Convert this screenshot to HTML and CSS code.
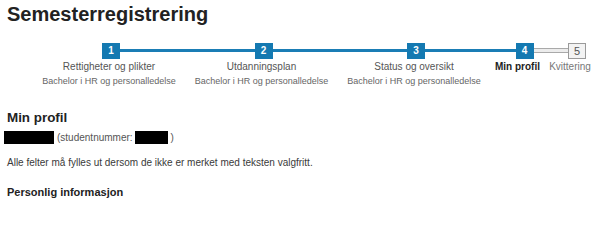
FILE: index.html
```html
<!DOCTYPE html>
<html lang="no">
<head>
<meta charset="utf-8">
<title>Semesterregistrering</title>
<link rel="stylesheet" href="styles.css">
</head>
<body>
<h1 class="title">Semesterregistrering</h1>
<ol class="steps">
  <li class="step step-done step-w1">
    <div class="track"><span class="box">1</span></div>
    <div class="label">Rettigheter og plikter</div>
    <div class="sub">Bachelor i HR og personalledelse</div>
  </li>
  <li class="step step-done step-w2">
    <div class="track"><span class="box">2</span></div>
    <div class="label">Utdanningsplan</div>
    <div class="sub">Bachelor i HR og personalledelse</div>
  </li>
  <li class="step step-done step-w3">
    <div class="track"><span class="box">3</span></div>
    <div class="label">Status og oversikt</div>
    <div class="sub">Bachelor i HR og personalledelse</div>
  </li>
  <li class="step step-current step-w4">
    <div class="track track-shift"><span class="box">4</span></div>
    <div class="label label-current">Min profil</div>
  </li>
  <li class="step step-todo step-w5">
    <div class="track track-shift"><span class="box box-todo">5</span></div>
    <div class="label label-todo">Kvittering</div>
  </li>
</ol>
<h2 class="subtitle">Min profil</h2>
<p class="ident"><span class="redact redact-name"></span> (studentnummer: <span class="redact redact-num"></span>)</p>
<p class="info">Alle felter må fylles ut dersom de ikke er merket med teksten valgfritt.</p>
<h3 class="section">Personlig informasjon</h3>
</body>
</html>
```
FILE: styles.css
```css
html, body {
  margin: 0;
  padding: 0;
  background: #ffffff;
}
body {
  padding: 0 7px;
  font-family: "Liberation Sans", Arial, sans-serif;
  color: #333333;
}
.title {
  margin: 2px 0 0;
  font-size: 20px;
  line-height: 24px;
  font-weight: bold;
  color: #222222;
}
.steps {
  list-style: none;
  margin: 17px 0 0 26px;
  padding: 0;
  display: flex;
}
.step {
  position: relative;
  text-align: center;
  flex: none;
}
.step-w1 { width: 152px; }
.step-w2 { width: 153px; }
.step-w3 { width: 152px; }
.step-w4 { width: 55px; }
.step-w5 { width: 50px; }
.track {
  position: relative;
  height: 16px;
  display: flex;
  justify-content: center;
  padding-left: 4px;
}
.track-shift {
  padding-left: 14px;
}
.step-w1 .track::after,
.step-w2 .track::after,
.step-w3 .track::after,
.step-w2 .track::before,
.step-w3 .track::before,
.step-w4 .track::before {
  content: "";
  position: absolute;
  top: 6px;
  height: 3px;
  background: #1a7db5;
}
.track::before { left: 0; width: 50%; }
.track::after { left: 50%; right: 0; }
.step-w4 .track::after,
.step-w5 .track::before {
  content: "";
  position: absolute;
  top: 5px;
  height: 3px;
  background: #ececec;
  border-top: 1px solid #a9a9a9;
  border-bottom: 1px solid #a9a9a9;
}
.step-w4 .track::after { left: 50%; right: 0; }
.step-w5 .track::before { left: 0; width: 50%; }
.box {
  position: relative;
  z-index: 1;
  width: 18px;
  height: 16px;
  background: #1479b1;
  color: #ffffff;
  font-size: 10px;
  font-weight: bold;
  line-height: 16px;
  text-align: center;
}
.box-todo {
  box-sizing: border-box;
  background: #f3f3f3;
  border: 1px solid #9a9a9a;
  color: #555555;
  font-weight: normal;
  font-size: 11px;
  line-height: 14px;
}
.label {
  margin-top: 2px;
  font-size: 10px;
  line-height: 12px;
  color: #555555;
  white-space: nowrap;
}
.label-current {
  font-weight: bold;
  color: #222222;
}
.label-todo {
  color: #777777;
}
.sub {
  margin-top: 3px;
  font-size: 9px;
  line-height: 11px;
  color: #666666;
  white-space: nowrap;
}
.subtitle {
  margin: 23px 0 0;
  font-size: 13.4px;
  line-height: 16px;
  font-weight: bold;
  color: #222222;
}
.ident {
  margin: 5px 0 0 -3px;
  font-size: 10px;
  line-height: 13px;
  color: #555555;
  display: flex;
  align-items: center;
  gap: 3px;
}
.redact {
  display: inline-block;
  height: 13px;
  background: #000000;
}
.redact-name { width: 50px; }
.redact-num { width: 33px; margin-left: -1px; }
.info {
  margin: 12px 0 0;
  font-size: 10px;
  line-height: 13px;
  color: #3a3a3a;
}
.section {
  margin: 16px 0 0;
  font-size: 11px;
  line-height: 14px;
  font-weight: bold;
  color: #222222;
}
```
